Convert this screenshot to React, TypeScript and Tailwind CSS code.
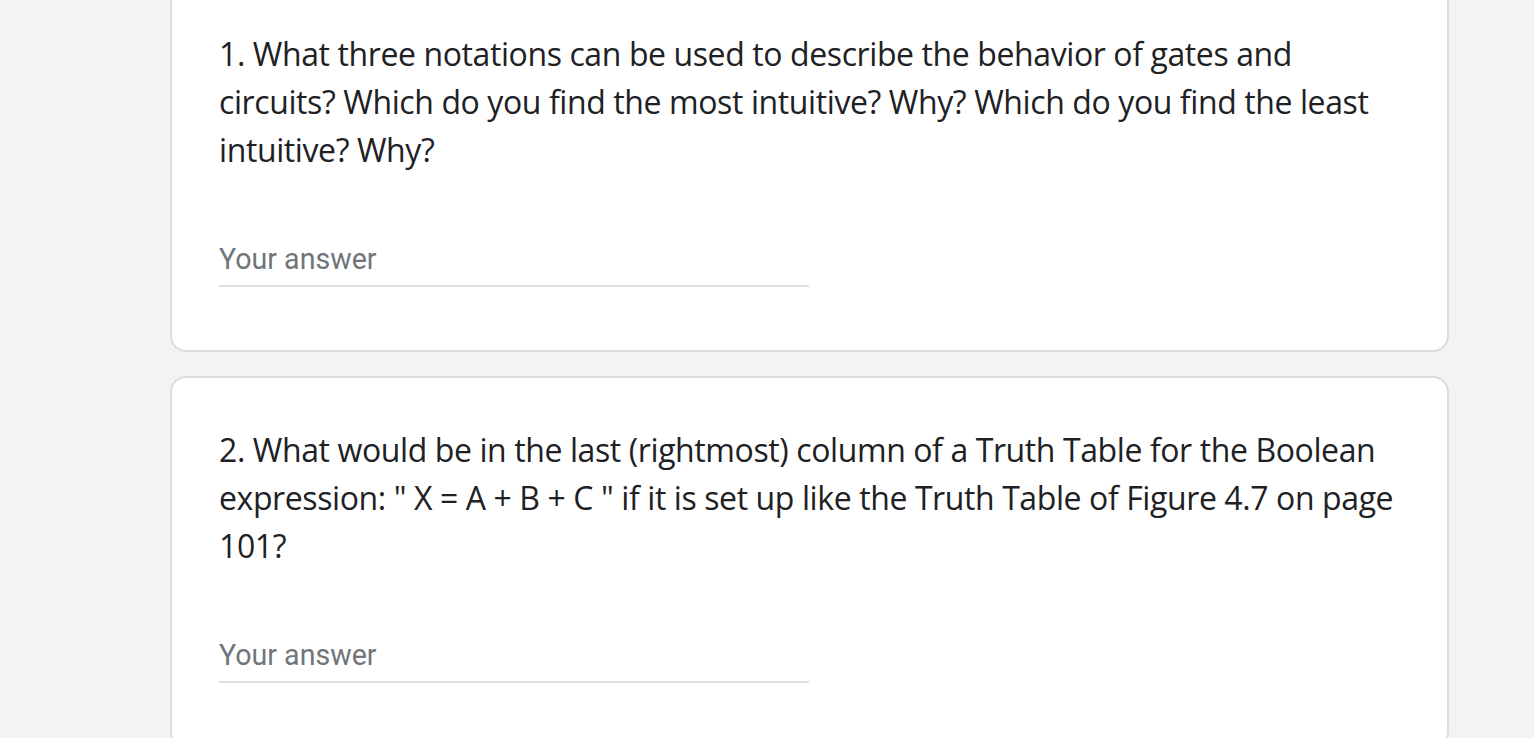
import React from "react";

const questions = [
  [
    "1. What three notations can be used to describe the behavior of gates and",
    "circuits? Which do you find the most intuitive? Why? Which do you find the least",
    "intuitive? Why?",
  ],
  [
    "2. What would be in the last (rightmost) column of a Truth Table for the Boolean",
    'expression: " X = A + B + C " if it is set up like the Truth Table of Figure 4.7 on page',
    "101?",
  ],
];

function QuestionCard({ lines }: { lines: string[] }) {
  return (
    <div className="w-[1279px] rounded-[16px] border-2 border-[#dadce0] bg-white px-[47px] pt-[48px] pb-[48px]">
      <div
        className="text-[32px] leading-[48px] text-[#202124] tracking-[-0.4px]"
        style={{ fontFamily: "'Open Sans', 'Liberation Sans', sans-serif" }}
      >
        {lines.map((l, i) => (
          <div key={i} className="whitespace-nowrap">
            {l}
          </div>
        ))}
      </div>
      <div className="mt-[65px] mb-[15px] w-[590px] border-b-2 border-[#e0e0e0]">
        <div
          className="h-[46px] pb-[6px] text-[28.6px] leading-[40px] text-[#70757a]"
          style={{ fontFamily: "Roboto, 'Liberation Sans', sans-serif" }}
        >
          Your answer
        </div>
      </div>
    </div>
  );
}

export default function App() {
  return (
    <div className="h-[738px] w-[1534px] overflow-hidden bg-[#f4f3f2]">
      <div className="ml-[170px] -mt-[20px] flex flex-col gap-[24px]">
        {questions.map((q, i) => (
          <QuestionCard key={i} lines={q} />
        ))}
      </div>
    </div>
  );
}
